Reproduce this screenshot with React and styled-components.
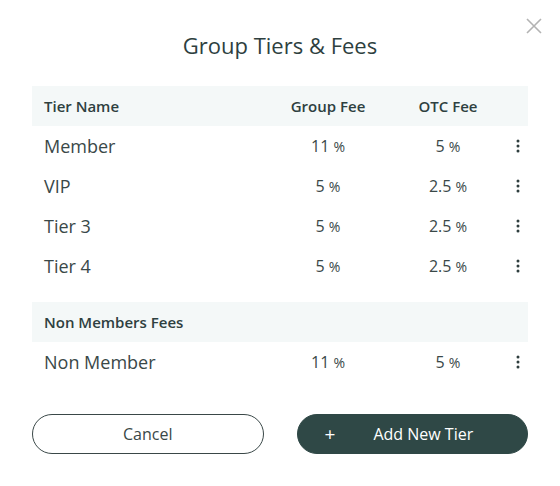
import React from 'react'
import styled, { createGlobalStyle } from 'styled-components'

const GlobalStyle = createGlobalStyle`
  html, body {
    margin: 0;
    padding: 0;
    background: #ffffff;
  }
  body {
    font-family: 'Open Sans', 'Noto Sans', sans-serif;
    color: #2e3d3d;
  }
`

const Modal = styled.div`
  position: relative;
  width: 560px;
  height: 486px;
  box-sizing: border-box;
  padding: 30px 32px 0;
  background: #fff;
`

const CloseButton = styled.button`
  position: absolute;
  top: 17px;
  right: 17px;
  width: 18px;
  height: 18px;
  padding: 0;
  border: none;
  background: none;
  cursor: pointer;
  display: flex;
`

const Title = styled.h2`
  margin: 0;
  height: 30px;
  line-height: 30px;
  text-align: center;
  font-size: 22px;
  font-weight: 400;
  color: #2e3f3f;
`

const Table = styled.div`
  margin-top: 26px;
  display: flex;
  flex-direction: column;
`

const Row = styled.div`
  display: grid;
  grid-template-columns: 1fr 120px 120px 20px;
  align-items: center;
  height: 40px;
  padding-left: 12px;
  background: ${p => (p.$head ? '#f4f8f8' : 'transparent')};
  margin-top: ${p => (p.$gap ? '16px' : '0')};
`

const HeadCell = styled.div`
  font-size: 15px;
  font-weight: 600;
  color: #2e4040;
  text-align: ${p => (p.$center ? 'center' : 'left')};
`

const NameCell = styled.div`
  font-size: 18px;
  color: #3a4848;
`

const ValueCell = styled.div`
  font-size: 16px;
  color: #3a4848;
  text-align: center;
`

const Pct = styled.span`
  font-size: 14px;
`

const MenuButton = styled.button`
  border: none;
  background: none;
  padding: 0;
  width: 20px;
  height: 20px;
  display: flex;
  align-items: center;
  justify-content: center;
  cursor: pointer;
`

const Actions = styled.div`
  margin-top: 32px;
  display: grid;
  grid-template-columns: 1fr 1fr;
  gap: 33px;
`

const Button = styled.button`
  height: 40px;
  border-radius: 20px;
  font-family: 'Open Sans', 'Noto Sans', sans-serif;
  font-size: 16px;
  cursor: pointer;
  display: flex;
  align-items: center;
  box-sizing: border-box;
  ${p => p.$primary ? `
    background: #2f4846;
    color: #ffffff;
    border: 1px solid #2f4846;
    justify-content: flex-start;
    padding-left: 27px;
    gap: 38px;
  ` : `
    background: #ffffff;
    color: #3a4848;
    border: 1px solid #3a4848;
    justify-content: center;
  `}
`

const Plus = styled.span`
  font-size: 19px;
  line-height: 1;
`

const CloseIcon = () => (
  <svg width="18" height="18" viewBox="0 0 18 18">
    <path d="M2 2 L16 16 M16 2 L2 16" stroke="#b3b3b3" strokeWidth="1.6" fill="none" />
  </svg>
)

const KebabIcon = () => (
  <svg width="4" height="14" viewBox="0 0 4 14">
    <circle cx="2" cy="2" r="1.5" fill="#2e3d3d" />
    <circle cx="2" cy="7" r="1.5" fill="#2e3d3d" />
    <circle cx="2" cy="12" r="1.5" fill="#2e3d3d" />
  </svg>
)

const tiers = [
  { name: 'Member', group: '11', otc: '5' },
  { name: 'VIP', group: '5', otc: '2.5' },
  { name: 'Tier 3', group: '5', otc: '2.5' },
  { name: 'Tier 4', group: '5', otc: '2.5' },
]

const FeeRow = ({ tier }) => (
  <Row>
    <NameCell>{tier.name}</NameCell>
    <ValueCell>{tier.group} <Pct>%</Pct></ValueCell>
    <ValueCell>{tier.otc} <Pct>%</Pct></ValueCell>
    <MenuButton aria-label='More'><KebabIcon /></MenuButton>
  </Row>
)

const App = () => {
  return (
    <>
      <GlobalStyle />
      <Modal>
        <CloseButton aria-label='Close'><CloseIcon /></CloseButton>
        <Title>Group Tiers &amp; Fees</Title>
        <Table>
          <Row $head>
            <HeadCell>Tier Name</HeadCell>
            <HeadCell $center>Group Fee</HeadCell>
            <HeadCell $center>OTC Fee</HeadCell>
            <div />
          </Row>
          {tiers.map(t => <FeeRow key={t.name} tier={t} />)}
          <Row $head $gap>
            <HeadCell>Non Members Fees</HeadCell>
          </Row>
          <FeeRow tier={{ name: 'Non Member', group: '11', otc: '5' }} />
        </Table>
        <Actions>
          <Button>Cancel</Button>
          <Button $primary>
            <Plus>+</Plus>
            Add New Tier
          </Button>
        </Actions>
      </Modal>
    </>
  )
}

export default App
